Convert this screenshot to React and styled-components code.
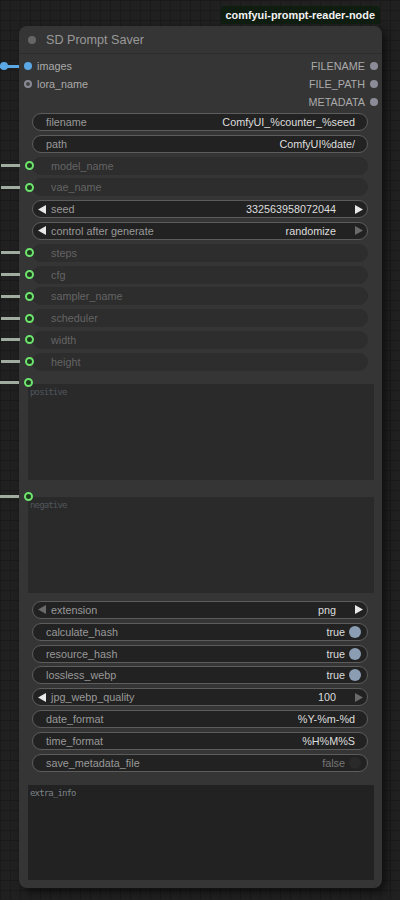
import React from 'react';
import styled, { createGlobalStyle } from 'styled-components';

const Global = createGlobalStyle`
  html, body { margin: 0; padding: 0; background: #202020; }
  * { box-sizing: border-box; }
`;

const Canvas = styled.div`
  min-height: 900px;
  padding: 6px 18px 12px 19px;
  background-color: #202020;
  background-image:
    linear-gradient(#1a1a1a 1px, transparent 1px),
    linear-gradient(90deg, #1a1a1a 1px, transparent 1px);
  background-size: 10px 10px;
  font-family: "Liberation Sans", Arial, sans-serif;
`;

const BadgeRow = styled.div`
  display: flex;
  justify-content: flex-end;
  padding-right: 2px;
`;

const Badge = styled.div`
  height: 18px;
  padding: 0 5px;
  display: flex;
  align-items: center;
  background: #0f1d11;
  color: #f2f2f2;
  font-weight: bold;
  font-size: 10.9px;
  border-radius: 4px 4px 0 0;
`;

const Node = styled.div`
  width: 363px;
  margin-top: 2px;
  background: #353535;
  border-radius: 8px;
  box-shadow: 4px 4px 8px rgba(0, 0, 0, 0.55);
  padding-bottom: 8px;
`;

const Title = styled.div`
  height: 28px;
  display: flex;
  align-items: center;
  gap: 10px;
  padding-left: 9px;
  border-bottom: 1px solid #2c2c2c;
  color: #999;
  font-size: 12.6px;
`;

const TitleDot = styled.span`
  width: 8px;
  height: 8px;
  border-radius: 50%;
  background: #666;
`;

const Slots = styled.div`
  padding-top: 3px;
`;

const SlotRow = styled.div`
  position: relative;
  height: 18px;
  display: flex;
  align-items: center;
  justify-content: space-between;
  font-size: 10.8px;
  color: #aaa;
`;

const SlotIn = styled.div`
  display: flex;
  align-items: center;
  gap: 5px;
  padding-left: 5px;
`;

const SlotOut = styled.div`
  display: flex;
  align-items: center;
  gap: 5px;
  padding-right: 4px;
  margin-left: auto;
`;

const Dot = styled.span`
  width: ${p => p.$size || 8}px;
  height: ${p => p.$size || 8}px;
  border-radius: 50%;
  flex: none;
  background: ${p => p.$fill};
  border: ${p => (p.$ring ? `2px solid ${p.$ring}` : 'none')};
`;

const Wire = styled.span`
  position: absolute;
  left: ${p => p.$left}px;
  top: 50%;
  width: 19px;
  height: 3px;
  margin-top: -1.5px;
  background: ${p => p.$color};
`;

const WireKnot = styled.span`
  position: absolute;
  left: -19px;
  top: 50%;
  width: 8px;
  height: 8px;
  margin-top: -4px;
  border-radius: 50%;
  background: #5aa8e6;
`;

const WidgetList = styled.div`
  display: flex;
  flex-direction: column;
  gap: 3.8px;
  margin: ${p => p.$top}px 14px 0 13px;
`;

const Pill = styled.div`
  position: relative;
  height: 18px;
  display: flex;
  align-items: center;
  border-radius: 9px;
  font-size: 10.8px;
  background: ${p => (p.$off ? '#2d2d2d' : '#222')};
  border: 1px solid ${p => (p.$off ? '#2d2d2d' : '#5c5c5c')};
  padding: 0 ${p => p.$pr}px 0 ${p => p.$pl}px;
`;

const Label = styled.span`
  color: ${p => (p.$off ? '#646464' : '#999')};
  flex: 1;
  white-space: nowrap;
`;

const Value = styled.span`
  color: ${p => (p.$dim ? '#777' : '#ddd')};
  white-space: nowrap;
`;

const Arrow = styled.svg`
  flex: none;
  width: 8px;
  height: 9px;
`;

const Knob = styled.span`
  width: 12px;
  height: 12px;
  border-radius: 50%;
  margin-left: 4px;
  background: ${p => (p.$on ? '#8a9db2' : '#2a2a2a')};
`;

const SlotDot = styled.span`
  position: absolute;
  left: ${p => p.$left}px;
  top: ${p => (p.$top == null ? '50%' : `${p.$top}px`)};
  margin-top: ${p => (p.$top == null ? '-4.5px' : '0')};
  width: 9px;
  height: 9px;
  border-radius: 50%;
  background: #1d3a1d;
  border: 2.5px solid #6ee46e;
`;

const TextBlock = styled.div`
  position: relative;
  margin: ${p => p.$top}px 8px 0 9px;
  height: ${p => p.$h}px;
  background: ${p => p.$bg};
  padding: 3px 2px;
  font-family: "DejaVu Sans Mono", "Liberation Mono", monospace;
  font-size: 9px;
  letter-spacing: -0.85px;
  color: ${p => p.$color};
`;

const Tri = ({ dir, on }) => (
  <Arrow viewBox="0 0 8 9">
    <polygon
      points={dir === 'l' ? '8,0 8,9 0,4.5' : '0,0 0,9 8,4.5'}
      fill={on ? '#e8e8e8' : '#6a6a6a'}
    />
  </Arrow>
);

const Widget = ({ w }) => {
  if (w.kind === 'off') {
    return (
      <Pill $off $pl={18} $pr={13}>
        <Wire $left={-32} $color="#a0aca0" />
        <SlotDot $left={-8.5} />
        <Label $off>{w.label}</Label>
      </Pill>
    );
  }
  if (w.kind === 'combo') {
    return (
      <Pill $pl={5} $pr={4}>
        <Tri dir="l" on={w.l} />
        <Label style={{ marginLeft: 5 }}>{w.label}</Label>
        <Value>{w.value}</Value>
        <span style={{ width: 19 }} />
        <Tri dir="r" on={w.r} />
      </Pill>
    );
  }
  if (w.kind === 'toggle') {
    return (
      <Pill $pl={13} $pr={6}>
        <Label>{w.label}</Label>
        <Value $dim={!w.on}>{w.on ? 'true' : 'false'}</Value>
        <Knob $on={w.on} />
      </Pill>
    );
  }
  return (
    <Pill $pl={13} $pr={12}>
      <Label>{w.label}</Label>
      <Value>{w.value}</Value>
    </Pill>
  );
};

const top = [
  { kind: 'text', label: 'filename', value: 'ComfyUI_%counter_%seed' },
  { kind: 'text', label: 'path', value: 'ComfyUI%date/' },
  { kind: 'off', label: 'model_name' },
  { kind: 'off', label: 'vae_name' },
  { kind: 'combo', label: 'seed', value: '332563958072044', l: true, r: true },
  { kind: 'combo', label: 'control after generate', value: 'randomize', l: true, r: false },
  { kind: 'off', label: 'steps' },
  { kind: 'off', label: 'cfg' },
  { kind: 'off', label: 'sampler_name' },
  { kind: 'off', label: 'scheduler' },
  { kind: 'off', label: 'width' },
  { kind: 'off', label: 'height' },
];

const bottom = [
  { kind: 'combo', label: 'extension', value: 'png', l: false, r: true },
  { kind: 'toggle', label: 'calculate_hash', on: true },
  { kind: 'toggle', label: 'resource_hash', on: true },
  { kind: 'toggle', label: 'lossless_webp', on: true },
  { kind: 'combo', label: 'jpg_webp_quality', value: '100', l: true, r: false },
  { kind: 'text', label: 'date_format', value: '%Y-%m-%d' },
  { kind: 'text', label: 'time_format', value: '%H%M%S' },
  { kind: 'toggle', label: 'save_metadata_file', on: false },
];

export default function App() {
  return (
    <>
      <Global />
      <Canvas>
        <BadgeRow>
          <Badge>comfyui-prompt-reader-node</Badge>
        </BadgeRow>
        <Node>
          <Title>
            <TitleDot />
            SD Prompt Saver
          </Title>
          <Slots>
            <SlotRow>
              <WireKnot />
              <Wire $left={-19} $color="#5aa8e6" />
              <SlotIn>
                <Dot $fill="#5aa8e6" />
                images
              </SlotIn>
              <SlotOut>
                FILENAME
                <Dot $size={8} $fill="#8c8c98" />
              </SlotOut>
            </SlotRow>
            <SlotRow>
              <SlotIn>
                <Dot $fill="#444" $ring="#8a8a94" />
                lora_name
              </SlotIn>
              <SlotOut>
                FILE_PATH
                <Dot $size={8} $fill="#8c8c98" />
              </SlotOut>
            </SlotRow>
            <SlotRow>
              <SlotOut>
                METADATA
                <Dot $size={8} $fill="#8c8c98" />
              </SlotOut>
            </SlotRow>
          </Slots>
          <WidgetList $top={2}>
            {top.map(w => <Widget key={w.label} w={w} />)}
          </WidgetList>
          <TextBlock $top={13.2} $h={96} $bg="#2a2a2a" $color="#50565c">
            <Wire $left={-28} $color="#a0aca0" style={{ top: -1 }} />
            <SlotDot $left={-4.5} $top={-5.5} />
            positive
          </TextBlock>
          <TextBlock $top={17} $h={96} $bg="#2a2a2a" $color="#50565c">
            <Wire $left={-28} $color="#a0aca0" style={{ top: 0 }} />
            <SlotDot $left={-4.5} $top={-4.5} />
            negative
          </TextBlock>
          <WidgetList $top={8}>
            {bottom.map(w => <Widget key={w.label} w={w} />)}
          </WidgetList>
          <TextBlock $top={13.4} $h={95} $bg="#222" $color="#7c8288">
            extra_info
          </TextBlock>
        </Node>
      </Canvas>
    </>
  );
}
